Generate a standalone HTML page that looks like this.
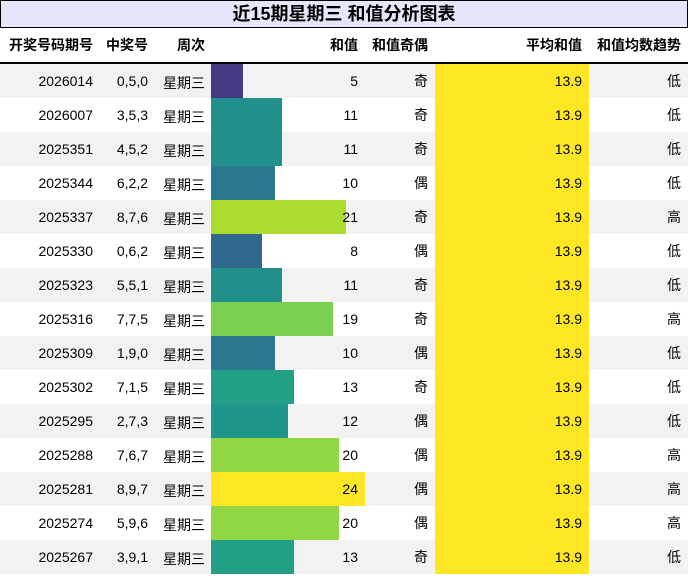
<!DOCTYPE html><html><head><meta charset="utf-8"><style>
body{margin:0;width:688px;height:575px;overflow:hidden;background:#fff;font-family:"Liberation Sans","Noto Sans CJK SC",sans-serif;font-size:14px;color:#000}
.t{position:absolute;left:0;top:0;width:686px;height:26px;background:#e6e6fa;border:1px solid #000;text-align:center;font-weight:bold;font-size:18px;line-height:26px}
.h{position:absolute;top:28px;height:34px;border-bottom:2px solid #000;width:688px;font-weight:bold}
.r{position:absolute;left:0;width:688px;height:34px}
.c{position:absolute;top:0;height:34px;line-height:34px;text-align:right;white-space:nowrap}
.b{position:absolute;top:0;height:34px;left:211px}
.y{position:absolute;top:0;height:34px;left:435px;width:154px;background:#fde725}
</style></head><body>
<div class="t">近15期星期三 和值分析图表</div>
<div class="h">
<div class="c" style="left:0;width:93px">开奖号码期号</div>
<div class="c" style="left:100px;width:48px">中奖号</div>
<div class="c" style="left:155px;width:50px">周次</div>
<div class="c" style="left:211px;width:147px">和值</div>
<div class="c" style="left:365px;width:63px">和值奇偶</div>
<div class="c" style="left:435px;width:147px">平均和值</div>
<div class="c" style="left:589px;width:92px">和值均数趋势</div>
</div>
<div id="rows"></div>
<script>
var d=[["2026014","0,5,0",5,"奇","低","#443983"],["2026007","3,5,3",11,"奇","低","#21908d"],["2025351","4,5,2",11,"奇","低","#21908d"],["2025344","6,2,2",10,"偶","低","#2a788e"],["2025337","8,7,6",21,"奇","高","#addc30"],["2025330","0,6,2",8,"偶","低","#31688e"],["2025323","5,5,1",11,"奇","低","#21908d"],["2025316","7,7,5",19,"奇","高","#7ad151"],["2025309","1,9,0",10,"偶","低","#2a788e"],["2025302","7,1,5",13,"奇","低","#22a085"],["2025295","2,7,3",12,"偶","低","#1f968b"],["2025288","7,6,7",20,"偶","高","#90d743"],["2025281","8,9,7",24,"偶","高","#fde725"],["2025274","5,9,6",20,"偶","高","#90d743"],["2025267","3,9,1",13,"奇","低","#22a085"]];
var h="";d.forEach(function(e,i){h+='<div class="r" style="top:'+(64+i*34)+'px;background:'+(i%2?'#fff':'#f2f2f2')+'">'+
'<div class="b" style="width:'+Math.round(e[2]*154/24)+'px;background:'+e[5]+'"></div><div class="y"></div>'+
'<div class="c" style="left:0;width:93px">'+e[0]+'</div>'+
'<div class="c" style="left:100px;width:48px">'+e[1]+'</div>'+
'<div class="c" style="left:155px;width:50px;top:2px">星期三</div>'+
'<div class="c" style="left:211px;width:147px">'+e[2]+'</div>'+
'<div class="c" style="left:365px;width:63px">'+e[3]+'</div>'+
'<div class="c" style="left:435px;width:147px">13.9</div>'+
'<div class="c" style="left:589px;width:92px">'+e[4]+'</div></div>'});
document.getElementById("rows").innerHTML=h;
</script></body></html>
